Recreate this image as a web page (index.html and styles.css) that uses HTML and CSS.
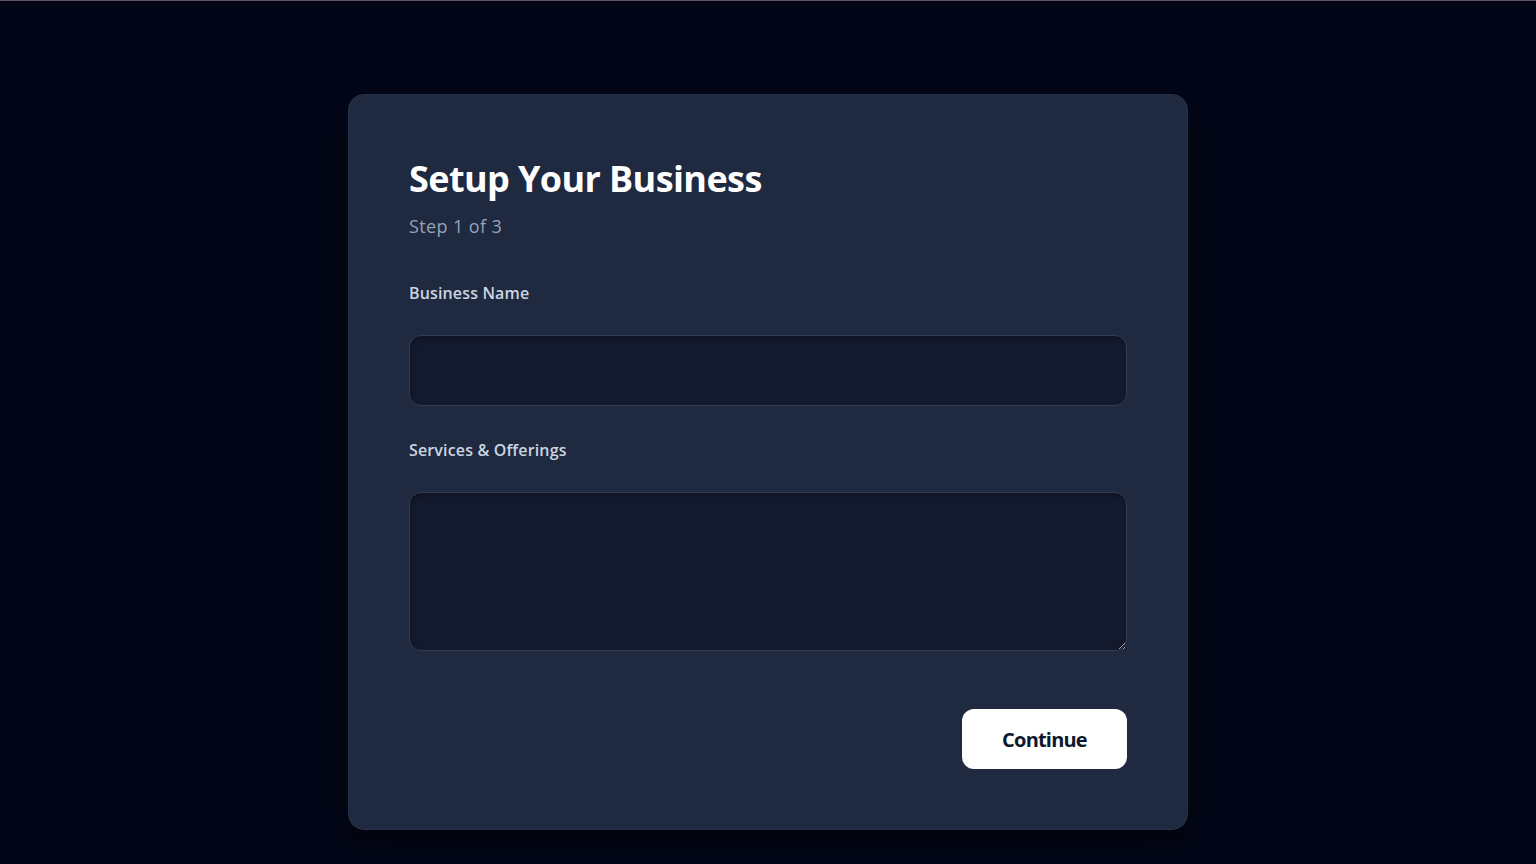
FILE: index.html
```html
<!DOCTYPE html>
<html lang="en">
<head>
<meta charset="utf-8">
<title>Setup Your Business</title>
<link rel="stylesheet" href="styles.css">
</head>
<body>
<div class="topline"></div>
<main class="page">
  <section class="card">
    <h1 class="title">Setup Your Business</h1>
    <p class="step">Step 1 of 3</p>
    <form class="form">
      <label class="field">
        <span class="label">Business Name</span>
        <input class="input" type="text">
      </label>
      <label class="field">
        <span class="label">Services &amp; Offerings</span>
        <textarea class="textarea"></textarea>
      </label>
      <div class="actions">
        <button type="button" class="btn">Continue</button>
      </div>
    </form>
  </section>
</main>
</body>
</html>
```

FILE: styles.css
```css
* { box-sizing: border-box; }
html, body { margin: 0; padding: 0; }
body {
  background: #030617;
  font-family: "Open Sans", "Noto Sans", sans-serif;
  height: 864px;
  overflow: hidden;
}
.topline {
  height: 1px;
  background: #5e5660;
}
.page {
  display: flex;
  justify-content: center;
  padding-top: 93px;
}
.card {
  width: 840px;
  background: #1f2940;
  border: 1px solid #273248;
  border-radius: 16px;
  padding: 60px;
  box-shadow: 0 10px 30px rgba(0, 0, 0, 0.5);
}
.title {
  margin: 4px 0 0;
  font-size: 36px;
  line-height: 40px;
  font-weight: 700;
  color: #ffffff;
  letter-spacing: -0.6px;
}
.step {
  margin: 13px 0 0;
  font-size: 18px;
  line-height: 28px;
  color: #94a3b8;
  letter-spacing: 0.4px;
}
.form {
  display: flex;
  flex-direction: column;
  margin-top: 41px;
}
.field {
  display: flex;
  flex-direction: column;
  gap: 30px;
  margin-bottom: 32px;
}
.label {
  font-size: 16px;
  line-height: 24px;
  font-weight: 600;
  color: #cbd5e1;
  letter-spacing: 0.15px;
}
.input, .textarea {
  display: block;
  width: 100%;
  background: #131a2e;
  border: 1px solid #323c52;
  border-radius: 12px;
  color: #e2e8f0;
  font: inherit;
  outline: none;
  box-shadow: inset 2px 2px 4px rgba(0, 0, 0, 0.25);
}
.input { height: 71px; padding: 0 20px; }
.textarea { height: 159px; padding: 16px 20px; resize: vertical; }
.actions {
  display: flex;
  justify-content: flex-end;
  margin-top: 26px;
}
.btn {
  width: 165px;
  height: 60px;
  background: #ffffff;
  border: none;
  border-radius: 12px;
  color: #0f172a;
  font-family: inherit;
  font-size: 20px;
  font-weight: 700;
  letter-spacing: -0.8px;
  cursor: pointer;
}
```
